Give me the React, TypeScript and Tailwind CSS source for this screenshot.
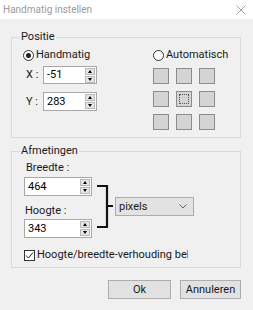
import React from 'react';

// Small up/down spinner shown inside numeric inputs
function Spinner() {
  return (
    <div className="flex flex-col gap-[1px] mr-[1px]">
      <div className="w-[10px] h-[7px] bg-[#e6e6e6] border border-[#b8b8b8] flex items-center justify-center">
        <div className="w-0 h-0 border-l-[2.5px] border-r-[2.5px] border-b-[3px] border-l-transparent border-r-transparent border-b-black" />
      </div>
      <div className="w-[10px] h-[7px] bg-[#e6e6e6] border border-[#b8b8b8] flex items-center justify-center">
        <div className="w-0 h-0 border-l-[2.5px] border-r-[2.5px] border-t-[3px] border-l-transparent border-r-transparent border-t-black" />
      </div>
    </div>
  );
}

function NumberBox({ value, className = '' }: { value: string; className?: string }) {
  return (
    <div className={`flex items-center justify-between bg-white border border-[#a8a8a8] pl-[3px] ${className}`}>
      <span className="text-black">{value}</span>
      <Spinner />
    </div>
  );
}

function Radio({ checked, label }: { checked?: boolean; label: string }) {
  return (
    <div className="flex items-center gap-[2px] h-[14px]">
      <div className="w-[11px] h-[11px] rounded-full border border-[#333] bg-white flex items-center justify-center">
        {checked && <div className="w-[5px] h-[5px] rounded-full bg-[#222]" />}
      </div>
      <span>{label}</span>
    </div>
  );
}

export default function App() {
  const cells = Array.from({ length: 9 }, (_, i) => i);

  return (
    <div
      className="w-[253px] h-[310px] bg-[#f0f0f0] overflow-hidden text-[11px] leading-[14px] text-[#1a1a1a] flex flex-col"
      style={{ fontFamily: 'Roboto, "Noto Sans", sans-serif' }}
    >
      {/* Title bar */}
      <div className="h-[19px] bg-white flex items-center justify-between pl-[3px] pr-[7px] shrink-0">
        <span className="text-[10px] text-[#9b9b9b]">Handmatig instellen</span>
        <svg width="10" height="10" viewBox="0 0 10 10" className="text-[#9b9b9b]">
          <path d="M0.5 0.5 L9.5 9.5 M9.5 0.5 L0.5 9.5" stroke="currentColor" strokeWidth="0.9" />
        </svg>
      </div>

      {/* Positie */}
      <fieldset className="mt-[11px] ml-[11px] w-[230px] h-[108px] border border-[#d9d9d9] px-[11px] shrink-0">
        <legend className="px-[1px] ml-[-3px]">Positie</legend>
        <div className="flex">
          <div className="w-[130px] flex flex-col">
            <div className="mt-[4px]">
              <Radio checked label="Handmatig" />
            </div>
            <div className="flex items-center mt-[4px]">
              <span className="w-[17px] ml-[3px]">X :</span>
              <NumberBox value="-51" className="w-[54px] h-[18px]" />
            </div>
            <div className="flex items-center mt-[8px]">
              <span className="w-[17px] ml-[3px]">Y :</span>
              <NumberBox value="283" className="w-[54px] h-[19px]" />
            </div>
          </div>
          <div className="flex flex-col">
            <div className="mt-[4px]">
              <Radio label="Automatisch" />
            </div>
            <div className="grid grid-cols-3 gap-[7px] mt-[6px] w-[62px]">
              {cells.map((i) => (
                <div
                  key={i}
                  className="w-[16px] h-[16px] bg-[#d4d4d4] border border-[#8c8c8c] flex items-center justify-center"
                >
                  {i === 4 && <div className="w-[10px] h-[10px] border border-dotted border-[#555]" />}
                </div>
              ))}
            </div>
          </div>
        </div>
      </fieldset>

      {/* Afmetingen */}
      <fieldset className="mt-[6px] ml-[11px] w-[230px] h-[124px] border border-[#d9d9d9] px-[12px] shrink-0">
        <legend className="px-[1px] ml-[-4px]">Afmetingen</legend>
        <div className="flex items-start mt-[3px]">
          <div className="flex flex-col w-[68px]">
            <span className="ml-[2px]">Breedte :</span>
            <NumberBox value="464" className="w-[68px] h-[19px] mt-[2px]" />
            <span className="ml-[1px] mt-[8px]">Hoogte :</span>
            <NumberBox value="343" className="w-[68px] h-[19px] mt-[1px]" />
          </div>
          <svg width="16" height="44" viewBox="0 0 16 44" className="mt-[24px] ml-[5px]">
            <path d="M0 1 H10 V42 H0 M10 21 H16" fill="none" stroke="#111" strokeWidth="2.2" />
          </svg>
          <div className="mt-[36px] ml-[2px] w-[79px] h-[19px] bg-[#e2e2e2] border border-[#acacac] flex items-center justify-between pl-[3px] pr-[6px]">
            <span>pixels</span>
            <svg width="8" height="5" viewBox="0 0 8 5">
              <path d="M0.5 0.5 L4 4 L7.5 0.5" fill="none" stroke="#555" strokeWidth="0.9" />
            </svg>
          </div>
        </div>
        <div className="flex items-center gap-[2px] mt-[10px]">
          <div className="w-[11px] h-[11px] border border-[#333] bg-white flex items-center justify-center">
            <svg width="9" height="9" viewBox="0 0 9 9">
              <path d="M1 4.5 L3.5 7 L8 1.5" fill="none" stroke="#222" strokeWidth="1" />
            </svg>
          </div>
          <span className="w-[151px] overflow-hidden whitespace-nowrap">Hoogte/breedte-verhouding behouden</span>
        </div>
      </fieldset>

      {/* Buttons */}
      <div className="flex justify-end gap-[9px] mt-[12px] mr-[12px]">
        <button className="w-[63px] h-[19px] bg-[#e1e1e1] border border-[#adadad] text-center">Ok</button>
        <button className="w-[61px] h-[19px] bg-[#e1e1e1] border border-[#adadad] text-center">Annuleren</button>
      </div>
    </div>
  );
}
